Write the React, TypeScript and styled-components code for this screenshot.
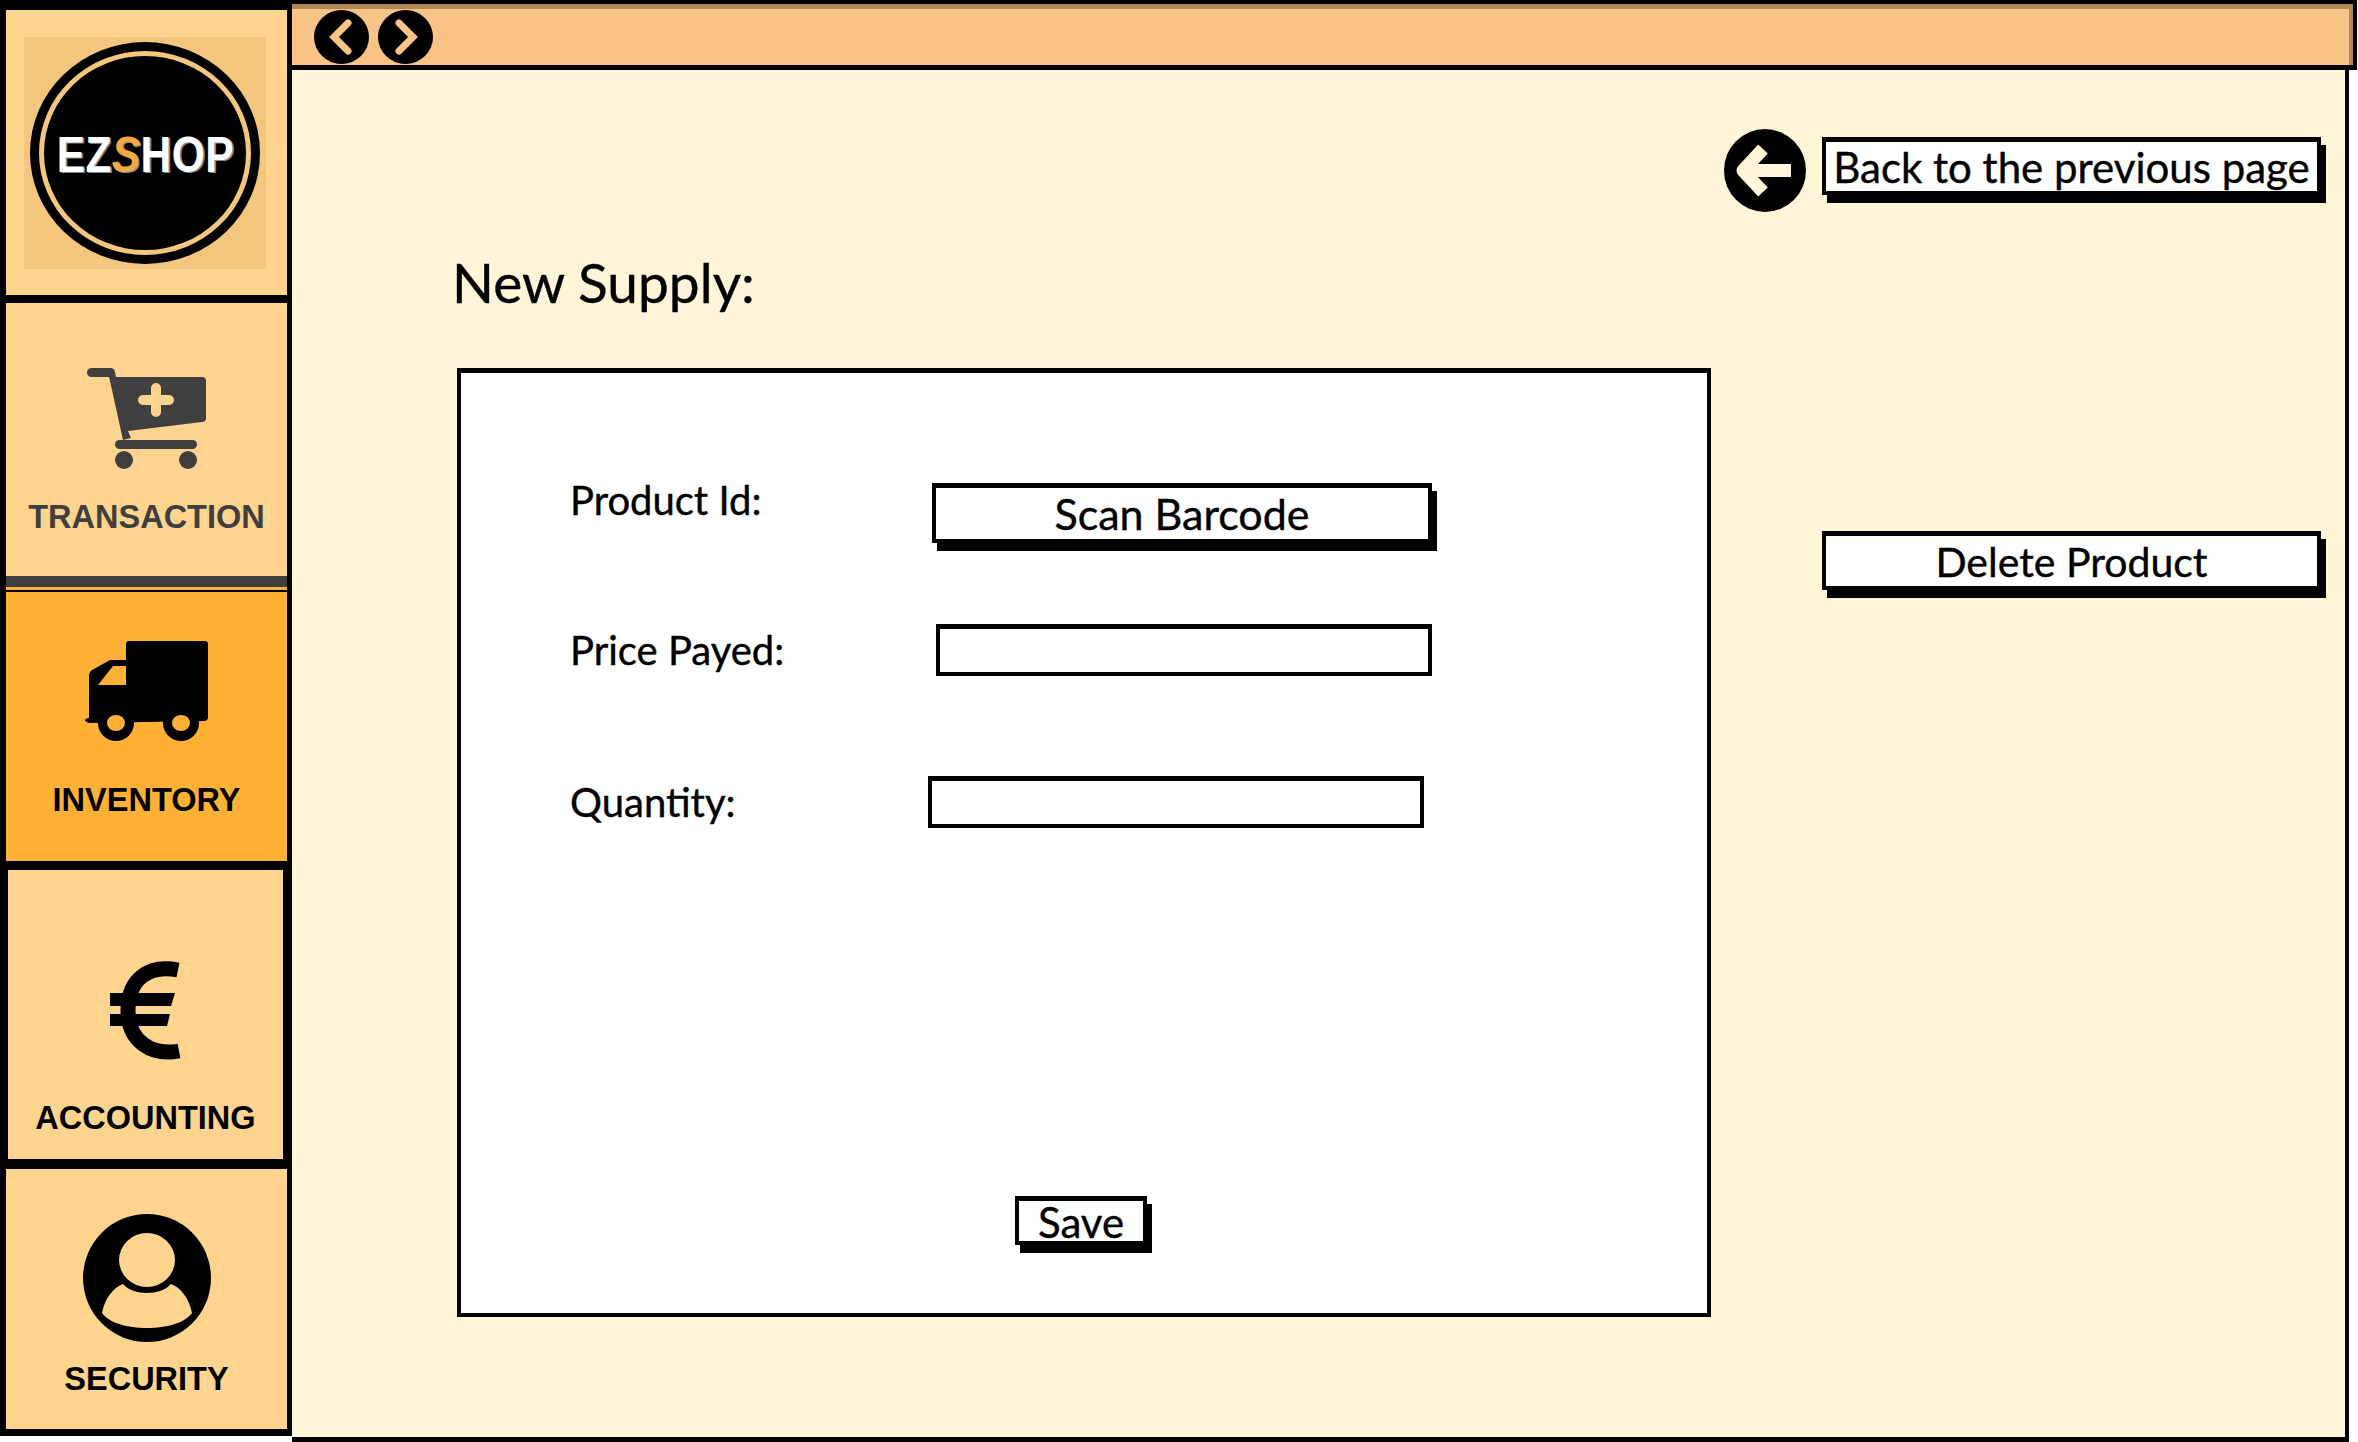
import React from 'react';
import styled, { createGlobalStyle } from 'styled-components';

const GlobalStyle = createGlobalStyle`
  html, body {
    margin: 0;
    padding: 0;
    background: #fff;
  }
  body {
    font-family: 'Lato', 'Liberation Sans', sans-serif;
    color: #000;
    -webkit-text-stroke: 0.4px #000;
  }
`;

const navColor = '#fed48f';
const activeColor = '#ffb136';
const pageColor = '#fff5d8';

const Shell = styled('div')`
  display: flex;
  height: 1442px;
  overflow: hidden;
  width: 2358px;
`;

const Sidebar = styled('nav')`
  background: #000;
  box-sizing: border-box;
  display: flex;
  flex: none;
  flex-direction: column;
  height: 1436px;
  padding: 10px 5px 0 6px;
  width: 292px;
`;

const NavCell = styled('div')<{ $height: number; $gap: number; $top: number; $active?: boolean; $narrow?: boolean }>`
  align-items: center;
  background: ${props => (props.$active ? activeColor : navColor)};
  display: flex;
  flex: none;
  flex-direction: column;
  height: ${props => props.$height}px;
  margin: 0 ${props => (props.$narrow ? 4 : 0)}px ${props => props.$gap}px ${props => (props.$narrow ? 2 : 0)}px;
  padding-top: ${props => props.$top}px;
  box-sizing: border-box;
`;

const LogoCell = styled('div')`
  align-items: center;
  background: ${navColor};
  display: flex;
  flex: none;
  height: 285px;
  justify-content: center;
  margin-bottom: 8px;
  padding-right: 3px;
`;

const LogoTile = styled('div')`
  align-items: center;
  background: #f5c67d;
  display: flex;
  height: 232px;
  justify-content: center;
  width: 242px;
`;

const LogoDisc = styled('div')`
  align-items: center;
  background: #000;
  border: 5px solid #f5c67d;
  border-radius: 50%;
  box-shadow: 0 0 0 9px #000;
  box-sizing: border-box;
  display: flex;
  height: 204px;
  justify-content: center;
  padding-top: 5px;
  width: 212px;
`;

const LogoText = styled('span')`
  color: #fff;
  font-family: 'Liberation Sans', sans-serif;
  font-size: 50px;
  font-weight: 700;
  letter-spacing: 0.5px;
  line-height: 1;
  text-shadow: 2px 1px 0 #888;
  transform: scaleX(0.85);
  -webkit-text-stroke: 0;
  white-space: nowrap;
`;

const LogoAccent = styled('span')`
  color: #f4a93c;
  font-style: italic;
`;

const NavLabel = styled('span')<{ $muted?: boolean; $top: number }>`
  color: ${props => (props.$muted ? '#3f3f3f' : '#000')};
  font-family: 'Liberation Sans', sans-serif;
  font-size: 32.5px;
  font-weight: 700;
  line-height: 36px;
  margin-top: ${props => props.$top}px;
  white-space: nowrap;
  -webkit-text-stroke: 0;
`;

const NavRule = styled('div')`
  background: #3f3f3f;
  border-bottom: 3px solid ${activeColor};
  flex: none;
  height: 11px;
  margin-bottom: 2px;
`;

const Main = styled('main')`
  display: flex;
  flex: none;
  flex-direction: column;
  height: 1442px;
  width: 2065px;
`;

const Toolbar = styled('header')`
  align-items: center;
  background: #f9c486;
  border: solid #000;
  border-width: 4px 4px 5px 0;
  box-shadow: inset 0 5px 0 #b08654, inset -4px 0 0 #b08654;
  box-sizing: border-box;
  display: flex;
  flex: none;
  gap: 9px;
  height: 70px;
  padding: 5px 0 0 22px;
`;

const Canvas = styled('section')`
  background: ${pageColor};
  border: solid #000;
  border-width: 0 4px 5px 0;
  box-sizing: border-box;
  display: flex;
  flex: 1;
  margin-right: 8px;
`;

const FormColumn = styled('div')`
  display: flex;
  flex: none;
  flex-direction: column;
  padding-left: 165px;
  width: 1432px;
  box-sizing: border-box;
`;

const PageTitle = styled('h1')`
  font-size: 55px;
  font-weight: 400;
  line-height: 64px;
  margin: 180px 0 54px -5px;
`;

const Card = styled('div')`
  background: #fff;
  border: solid #000;
  border-width: 5px 4px 4px 4px;
  box-sizing: border-box;
  display: flex;
  flex-direction: column;
  height: 949px;
  padding: 106px 0 0 109px;
  width: 1254px;
`;

const FormRow = styled('div')<{ $height: number; $top?: number }>`
  align-items: center;
  display: flex;
  height: ${props => props.$height}px;
  margin-top: ${props => props.$top || 0}px;
`;

const FieldLabel = styled('label')<{ $width: number; $shift?: number }>`
  flex: none;
  font-size: 40px;
  line-height: 46px;
  position: relative;
  top: ${props => props.$shift || 0}px;
  width: ${props => props.$width}px;
`;

const Button = styled('button')<{ $width: number; $height: number; $size: number }>`
  background: #fff;
  border: 5px solid #000;
  border-width: 5px 4px 4px 4px;
  box-shadow: 5px 8px 0 #000;
  box-sizing: border-box;
  color: #000;
  flex: none;
  font-family: inherit;
  font-size: ${props => props.$size}px;
  height: ${props => props.$height}px;
  line-height: 1;
  padding: 0;
  white-space: nowrap;
  width: ${props => props.$width}px;
`;

const TextField = styled('div')`
  background: #fff;
  border: 4px solid #000;
  border-top-width: 5px;
  box-sizing: border-box;
  flex: none;
  height: 52px;
  width: 496px;
`;

const SaveRow = styled('div')`
  margin: 352px 0 0 445px;
`;

const ActionColumn = styled('aside')`
  display: flex;
  flex-direction: column;
  padding-top: 59px;
`;

const BackRow = styled('div')`
  align-items: flex-start;
  display: flex;
  gap: 16px;
`;

const BackSlot = styled('div')`
  padding-top: 8px;
`;

const DeleteRow = styled('div')`
  margin: 319px 0 0 98px;
`;

const NavArrow = ({ flip }: { flip?: boolean }) => (
  <svg width="55" height="54" viewBox="0 0 55 54">
    <ellipse cx="27.5" cy="27" rx="27.5" ry="27" fill="#000" />
    <path
      d={flip ? 'M21 13 L35 27 L21 41' : 'M34 13 L20 27 L34 41'}
      fill="none"
      stroke="#f9c486"
      strokeWidth="7"
      strokeLinecap="round"
      strokeLinejoin="miter"
    />
  </svg>
);

const BackIcon = () => (
  <svg width="82" height="83" viewBox="0 0 82 83">
    <ellipse cx="41" cy="41.5" rx="41" ry="41.5" fill="#000" />
    <path
      d="M39 20 L19 41.5 L39 63 M22 41.5 L67 41.5"
      fill="none"
      stroke={pageColor}
      strokeWidth="13"
      strokeLinejoin="round"
    />
  </svg>
);

const CartIcon = () => (
  <svg width="119" height="101" viewBox="0 0 119 101" fill="#3f3f3f">
    <rect x="0" y="0" width="28" height="9" rx="4.5" />
    <path d="M21 4 L28 4 L29 9 L115 9 Q119 9 119 13 L119 50 Q119 54 115 54 L41 63 L44 70 L36 72 Z" />
    <rect x="28" y="72" width="82" height="9" rx="4.5" />
    <circle cx="37" cy="92" r="9" />
    <circle cx="101" cy="92" r="9" />
    <path d="M56 32 L82 32 M69 20 L69 44" stroke={navColor} strokeWidth="10" strokeLinecap="round" />
  </svg>
);

const TruckIcon = () => (
  <svg width="123" height="100" viewBox="0 0 123 100" fill="#000">
    <path d="M44 0 L120 0 Q123 0 123 3 L123 76 Q123 80 119 80 L4 82 L0 80 Q0 77 4 77 L4 34 Q4 31 7 29 L25 19 L41 19 L41 3 Q41 0 44 0 Z" />
    <path d="M13 45 L28 26 L41 26 L41 45 Z" fill={activeColor} transform="translate(0 -1)" />
    <circle cx="31" cy="82" r="18" />
    <circle cx="96" cy="82" r="18" />
    <ellipse cx="31" cy="82" rx="9" ry="8" fill={activeColor} />
    <ellipse cx="96" cy="82" rx="9" ry="8" fill={activeColor} />
  </svg>
);

const EuroIcon = () => (
  <svg width="72" height="101" viewBox="0 0 72 101" fill="#000">
    <path d="M68 10 C 38 4, 18 20, 18 50 C 18 82, 42 96, 69 91" fill="none" stroke="#000" strokeWidth="15" />
    <path d="M0 33 L65 33 L61 46 L0 46 Z M0 54 L60 54 L57 66 L0 66 Z" />
  </svg>
);

const UserIcon = () => (
  <svg width="128" height="128" viewBox="0 0 128 128">
    <circle cx="64" cy="64" r="64" fill="#000" />
    <ellipse cx="64" cy="46" rx="28" ry="27" fill={navColor} />
    <path
      d="M19 99 C 22 84 30 74 40 70 C 50 82 78 82 88 70 C 98 74 106 84 109 99 C 95 119 33 119 19 99 Z"
      fill={navColor}
    />
  </svg>
);

const App = () => (
  <Shell>
    <GlobalStyle />
    <Sidebar>
      <LogoCell>
        <LogoTile>
          <LogoDisc>
            <LogoText>
              EZ<LogoAccent>S</LogoAccent>HOP
            </LogoText>
          </LogoDisc>
        </LogoTile>
      </LogoCell>
      <NavCell $height={273} $gap={0} $top={65}>
        <CartIcon />
        <NavLabel $muted $top={30}>TRANSACTION</NavLabel>
      </NavCell>
      <NavRule />
      <NavCell $active $height={269} $gap={9} $top={49}>
        <TruckIcon />
        <NavLabel $top={41}>INVENTORY</NavLabel>
      </NavCell>
      <NavCell $narrow $height={289} $gap={10} $top={90}>
        <EuroIcon />
        <NavLabel $top={39}>ACCOUNTING</NavLabel>
      </NavCell>
      <NavCell $height={260} $gap={0} $top={45}>
        <UserIcon />
        <NavLabel $top={19}>SECURITY</NavLabel>
      </NavCell>
    </Sidebar>
    <Main>
      <Toolbar>
        <NavArrow />
        <NavArrow flip />
      </Toolbar>
      <Canvas>
        <FormColumn>
          <PageTitle>New Supply:</PageTitle>
          <Card>
            <FormRow $height={67}>
              <FieldLabel $width={362} $shift={-13} htmlFor="scan">Product Id:</FieldLabel>
              <Button id="scan" $width={500} $height={60} $size={43}>Scan Barcode</Button>
            </FormRow>
            <FormRow $height={85} $top={61}>
              <FieldLabel $width={366}>Price Payed:</FieldLabel>
              <TextField />
            </FormRow>
            <FormRow $height={85} $top={67}>
              <FieldLabel $width={358}>Quantity:</FieldLabel>
              <TextField />
            </FormRow>
            <SaveRow>
              <Button $width={132} $height={49} $size={42}>Save</Button>
            </SaveRow>
          </Card>
        </FormColumn>
        <ActionColumn>
          <BackRow>
            <BackIcon />
            <BackSlot>
              <Button $width={499} $height={58} $size={42}>Back to the previous page</Button>
            </BackSlot>
          </BackRow>
          <DeleteRow>
            <Button $width={499} $height={59} $size={41}>Delete Product</Button>
          </DeleteRow>
        </ActionColumn>
      </Canvas>
    </Main>
  </Shell>
);

export default App;
